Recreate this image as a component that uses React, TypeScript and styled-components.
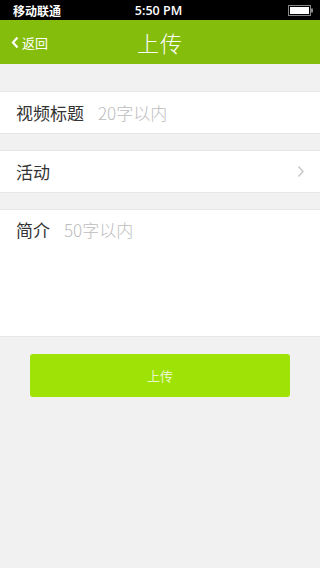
import { FC } from 'react'
import styled, { createGlobalStyle } from 'styled-components'

const GlobalStyle = createGlobalStyle`
  html, body {
    margin: 0;
    padding: 0;
    background: #f1f1f1;
    font-family: "Noto Sans CJK SC", "Open Sans", sans-serif;
  }
`

const Battery: FC = () => (
  <svg width="26" height="11" viewBox="0 0 26 11">
    <rect x="0.5" y="0.5" width="22" height="10" fill="none" stroke="#888" />
    <rect x="2" y="2" width="19" height="7" fill="#fff" />
    <rect x="23" y="3.5" width="2" height="4" fill="#888" />
  </svg>
)

const BackArrow: FC = () => (
  <svg width="8" height="13" viewBox="0 0 8 13">
    <path d="M6.5 1.5 L2 6.5 L6.5 11.5" fill="none" stroke="#fff" strokeWidth="2.2" />
  </svg>
)

const Chevron: FC = () => (
  <svg width="8" height="13" viewBox="0 0 8 13">
    <path d="M1.5 1.5 L6 6.5 L1.5 11.5" fill="none" stroke="#c9c9c9" strokeWidth="1.5" />
  </svg>
)

export default function App() {
  return (
    <Page>
      <GlobalStyle />
      <StatusBar>
        <Carrier>移动联通</Carrier>
        <Clock>5:50 PM</Clock>
        <BatteryWrap>
          <Battery />
        </BatteryWrap>
      </StatusBar>
      <NavBar>
        <Back>
          <BackArrow />
          返回
        </Back>
        <Title>上传</Title>
      </NavBar>
      <Form>
        <Row>
          <Label>视频标题</Label>
          <Placeholder>20字以内</Placeholder>
        </Row>
        <Row>
          <Label>活动</Label>
          <RowEnd>
            <Chevron />
          </RowEnd>
        </Row>
        <TallRow>
          <Label>简介</Label>
          <Placeholder>50字以内</Placeholder>
        </TallRow>
      </Form>
      <Submit>上传</Submit>
    </Page>
  )
}

const Page = styled.div`
  width: 320px;
  min-height: 568px;
  background: #f1f1f1;
`

const StatusBar = styled.div`
  height: 20px;
  background: #000;
  color: #fff;
  display: grid;
  grid-template-columns: 1fr auto 1fr;
  align-items: center;
  padding: 0 6px 0 13px;
  font-size: 12px;
  font-weight: bold;
  box-sizing: border-box;
`

const Carrier = styled.span`
  font-size: 12px;
`

const Clock = styled.span`
  font-family: "Open Sans", sans-serif;
  font-size: 12.5px;
  font-weight: 600;
  margin-left: -10px;
`

const BatteryWrap = styled.span`
  display: flex;
  justify-content: flex-end;
`

const NavBar = styled.div`
  height: 44px;
  background: #84bd0c;
  position: relative;
  display: flex;
  align-items: center;
  justify-content: center;
`

const Back = styled.div`
  position: absolute;
  left: 11px;
  top: 0;
  bottom: 0;
  display: flex;
  align-items: center;
  gap: 3px;
  color: #fff;
  font-size: 13px;
`

const Title = styled.div`
  color: #fff;
  font-size: 22px;
  font-weight: 300;
  letter-spacing: 1px;
`

const Form = styled.div`
  padding-top: 27px;
  display: flex;
  flex-direction: column;
  gap: 16px;
`

const Row = styled.div`
  height: 41px;
  background: #fff;
  border-top: 1px solid #e6e6e6;
  border-bottom: 1px solid #e6e6e6;
  display: flex;
  align-items: center;
  padding: 0 16px;
  font-size: 17px;
`

const TallRow = styled(Row)`
  height: 128px;
  align-items: flex-start;
  padding-top: 7px;
  box-sizing: border-box;
`

const Label = styled.span`
  color: #333;
  margin-right: 14px;
`

const Placeholder = styled.span`
  color: #bdbdbd;
  font-weight: 300;
`

const RowEnd = styled.span`
  margin-left: auto;
  display: flex;
  align-items: center;
  margin-right: -1px;
`

const Submit = styled.button`
  display: block;
  margin: 17px 30px 0;
  width: 260px;
  height: 43px;
  border: none;
  border-radius: 3px;
  background: #9fe205;
  color: #eaf7cc;
  font-family: "Noto Sans CJK SC", sans-serif;
  font-size: 13px;
`
